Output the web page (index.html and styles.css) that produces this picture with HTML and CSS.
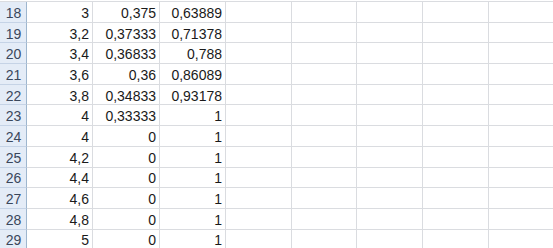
FILE: index.html
```html
<!DOCTYPE html>
<html>
<head>
<meta charset="utf-8">
<link rel="stylesheet" href="styles.css">
</head>
<body>
<div class="sheet">
  <div class="rh">18</div><div class="c">3</div><div class="c">0,375</div><div class="c">0,63889</div><div class="c"></div><div class="c"></div><div class="c"></div><div class="c"></div><div class="c"></div>
  <div class="rh">19</div><div class="c">3,2</div><div class="c">0,37333</div><div class="c">0,71378</div><div class="c"></div><div class="c"></div><div class="c"></div><div class="c"></div><div class="c"></div>
  <div class="rh">20</div><div class="c">3,4</div><div class="c">0,36833</div><div class="c">0,788</div><div class="c"></div><div class="c"></div><div class="c"></div><div class="c"></div><div class="c"></div>
  <div class="rh">21</div><div class="c">3,6</div><div class="c">0,36</div><div class="c">0,86089</div><div class="c"></div><div class="c"></div><div class="c"></div><div class="c"></div><div class="c"></div>
  <div class="rh">22</div><div class="c">3,8</div><div class="c">0,34833</div><div class="c">0,93178</div><div class="c"></div><div class="c"></div><div class="c"></div><div class="c"></div><div class="c"></div>
  <div class="rh">23</div><div class="c">4</div><div class="c">0,33333</div><div class="c">1</div><div class="c"></div><div class="c"></div><div class="c"></div><div class="c"></div><div class="c"></div>
  <div class="rh">24</div><div class="c">4</div><div class="c">0</div><div class="c">1</div><div class="c"></div><div class="c"></div><div class="c"></div><div class="c"></div><div class="c"></div>
  <div class="rh">25</div><div class="c">4,2</div><div class="c">0</div><div class="c">1</div><div class="c"></div><div class="c"></div><div class="c"></div><div class="c"></div><div class="c"></div>
  <div class="rh">26</div><div class="c">4,4</div><div class="c">0</div><div class="c">1</div><div class="c"></div><div class="c"></div><div class="c"></div><div class="c"></div><div class="c"></div>
  <div class="rh">27</div><div class="c">4,6</div><div class="c">0</div><div class="c">1</div><div class="c"></div><div class="c"></div><div class="c"></div><div class="c"></div><div class="c"></div>
  <div class="rh">28</div><div class="c">4,8</div><div class="c">0</div><div class="c">1</div><div class="c"></div><div class="c"></div><div class="c"></div><div class="c"></div><div class="c"></div>
  <div class="rh">29</div><div class="c">5</div><div class="c">0</div><div class="c">1</div><div class="c"></div><div class="c"></div><div class="c"></div><div class="c"></div><div class="c"></div>
</div>
</body>
</html>
```
FILE: styles.css
```css
html, body {
  margin: 0;
  padding: 0;
  background: #ffffff;
  overflow: hidden;
}
.sheet {
  display: grid;
  grid-template-columns: 27px 66px 67px 66px 66px 65px 66px 66px 66px;
  grid-auto-rows: 20.7px;
  border-top: 1px solid #dadce0;
  margin-top: 1px;
  font-family: "Liberation Sans", Arial, sans-serif;
  font-size: 14px;
}
.rh {
  box-sizing: border-box;
  background: #e4ecf7;
  color: #3a475c;
  border-right: 1px solid #9eb6ce;
  border-bottom: 1px solid #c5d3e6;
  display: flex;
  align-items: center;
  justify-content: center;
  padding-top: 2px;
  padding-left: 1px;
}
.c {
  box-sizing: border-box;
  border-right: 1px solid #dadce0;
  border-bottom: 1px solid #dadce0;
  color: #1a1a1a;
  display: flex;
  align-items: center;
  justify-content: flex-end;
  padding-right: 3px;
  padding-top: 2px;
}
```
